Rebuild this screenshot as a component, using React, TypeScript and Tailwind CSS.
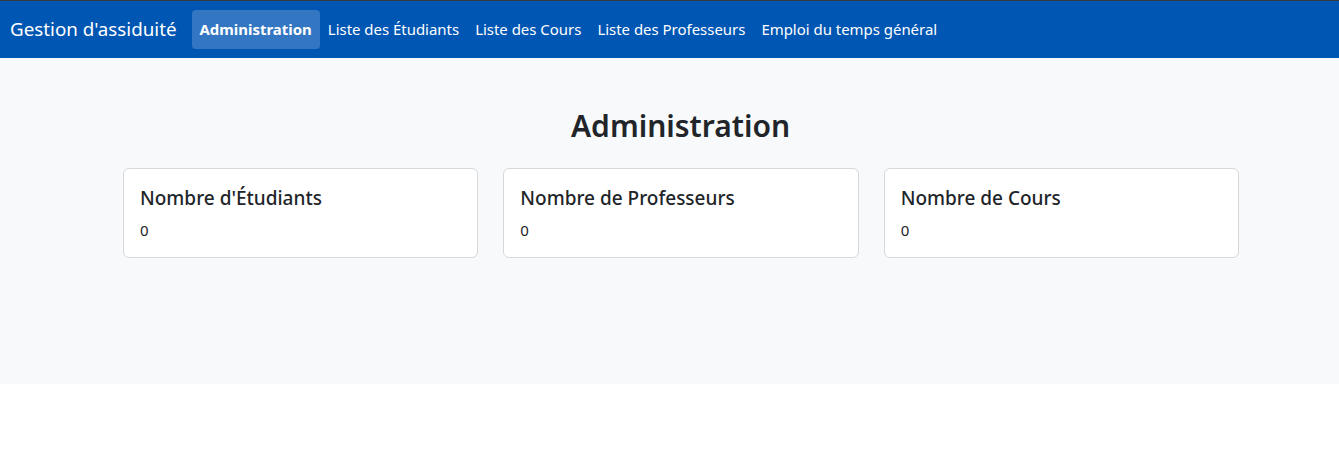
import React from 'react'

const links = [
  { label: 'Administration', active: true },
  { label: 'Liste des Étudiants' },
  { label: 'Liste des Cours' },
  { label: 'Liste des Professeurs' },
  { label: 'Emploi du temps général' },
]

const stats = [
  { title: "Nombre d'Étudiants", value: 0 },
  { title: 'Nombre de Professeurs', value: 0 },
  { title: 'Nombre de Cours', value: 0 },
]

const App: React.FC = () => {
  return (
    <div className="font-['Noto_Sans',sans-serif] text-[#212529]">
      <div className="h-px bg-[#343a40]" />
      <nav className="bg-[#0056b3] h-[57px] flex items-center px-[10px]">
        <span className="text-white text-[18.8px] mr-[15px]">Gestion d'assiduité</span>
        <ul className="flex items-center">
          {links.map((l) => (
            <li key={l.label}>
              <a
                href="#"
                className={
                  l.active
                    ? 'block px-2 h-[39px] leading-[39px] rounded bg-white/20 text-white font-bold text-[14.95px]'
                    : 'block px-2 h-[39px] leading-[39px] text-white text-[14.95px]'
                }
              >
                {l.label}
              </a>
            </li>
          ))}
        </ul>
      </nav>
      <main className="bg-[#f8f9fa] h-[326px] pt-[45px]">
        <h2 className="text-center text-[30px] font-semibold mb-[20px] pl-[22px]">Administration</h2>
        <div className="ml-[123px] w-[1116px] grid grid-cols-3 gap-[25px]">
          {stats.map((s) => (
            <div key={s.title} className="bg-white border border-[#d6d8db] rounded-md h-[90px] px-4 pt-[15px]">
              <h5 className="text-[19px] font-medium leading-[28px]">{s.title}</h5>
              <p className="text-[15px] mt-[7px]">{s.value}</p>
            </div>
          ))}
        </div>
      </main>
    </div>
  )
}

export default App
